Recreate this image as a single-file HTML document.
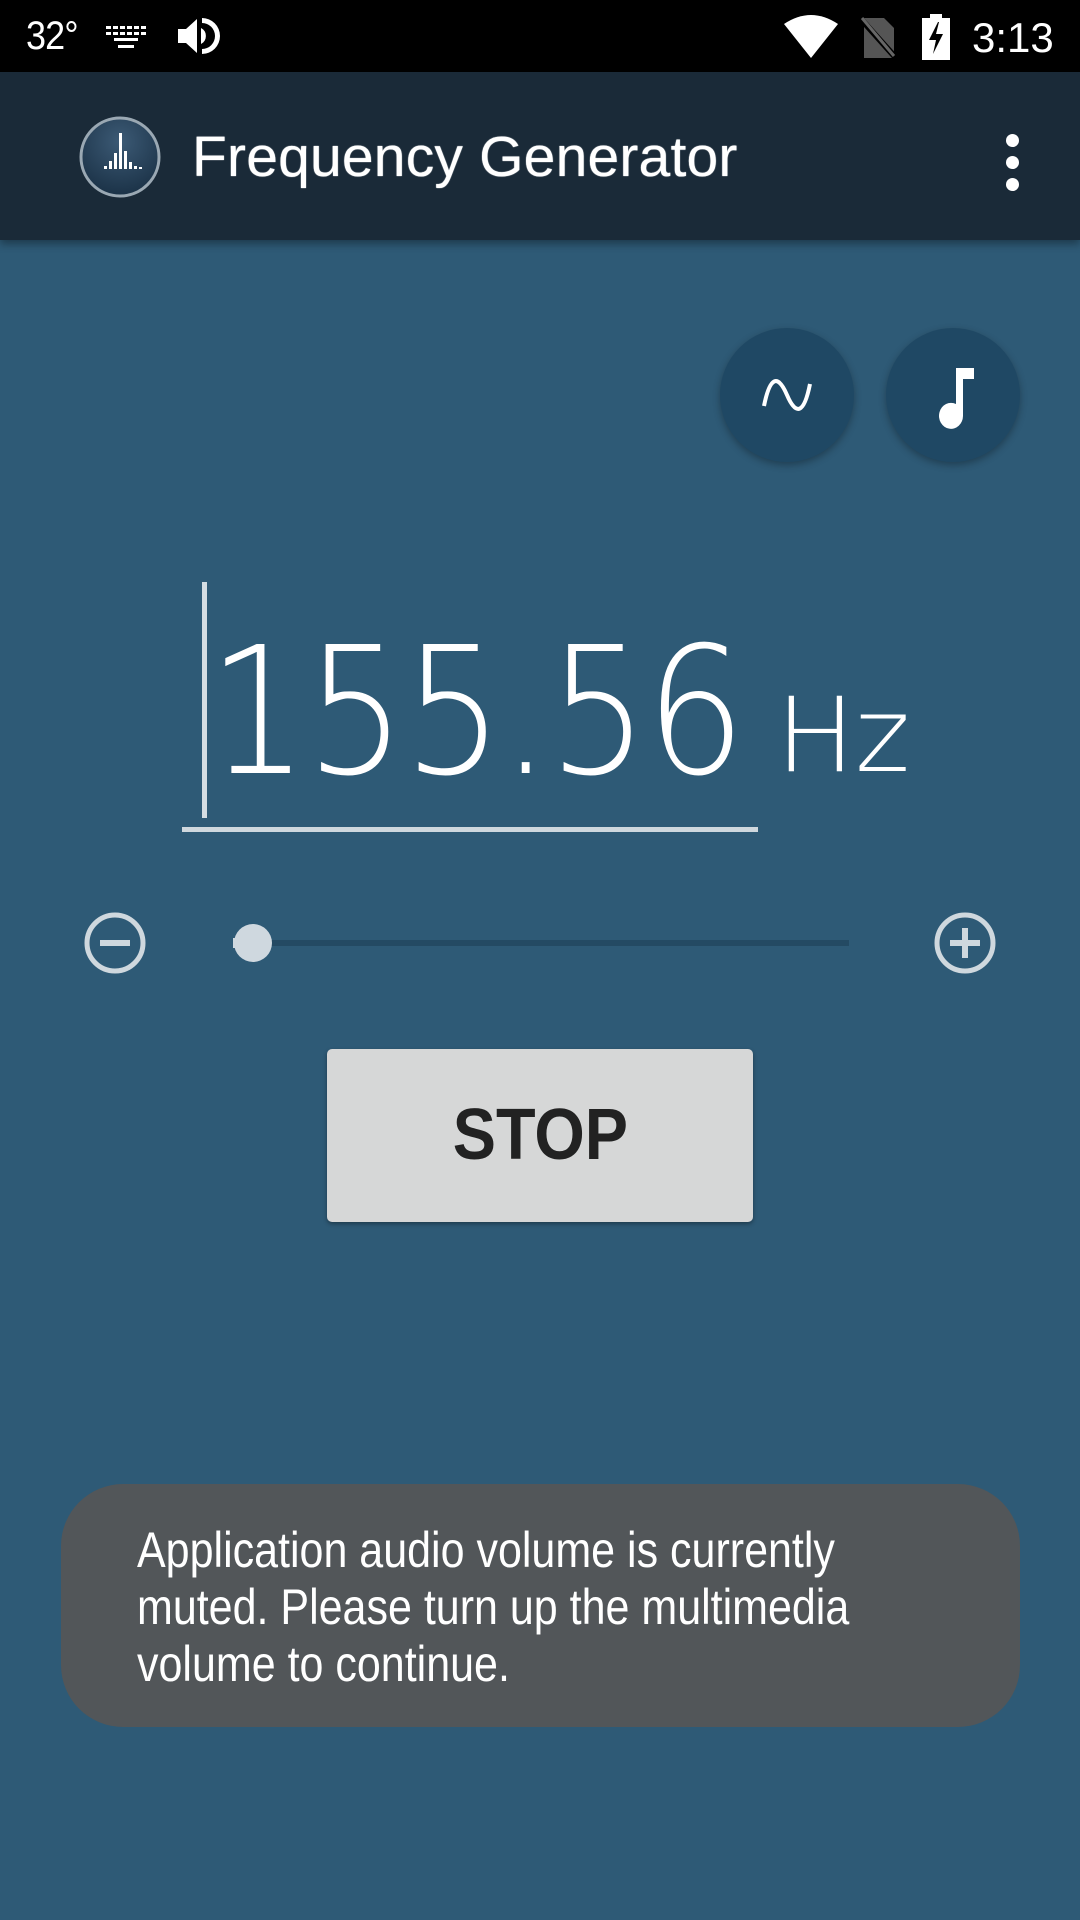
<!DOCTYPE html>
<html><head><meta charset="utf-8"><style>
*{margin:0;padding:0;box-sizing:border-box}
body{width:1080px;height:1920px;background:#2e5a76;position:relative;overflow:hidden;font-family:"Liberation Sans",sans-serif}
.abs{position:absolute}
#sb{left:0;top:0;width:1080px;height:72px;background:#000;color:#fff}
#ab{left:0;top:72px;width:1080px;height:168px;background:#1a2a38;box-shadow:0 4px 8px rgba(0,0,0,.35)}
.fab{width:134px;height:134px;border-radius:50%;background:#1f4864;box-shadow:0 3px 8px rgba(0,0,0,.3)}
</style></head><body>
<div id="sb" class="abs">
 <div class="abs" style="left:26px;top:14px;font-size:40px;letter-spacing:-1px;transform:scaleX(.9);transform-origin:left">32°</div>
 <svg class="abs" style="left:104px;top:24px" width="44" height="26" viewBox="0 0 44 26" fill="#fff"><g><rect x="2" y="2" width="5" height="3"/><rect x="9" y="2" width="5" height="3"/><rect x="16" y="2" width="5" height="3"/><rect x="23" y="2" width="5" height="3"/><rect x="30" y="2" width="5" height="3"/><rect x="37" y="2" width="5" height="3"/><rect x="2" y="8" width="5" height="3"/><rect x="9" y="8" width="5" height="3"/><rect x="16" y="8" width="5" height="3"/><rect x="23" y="8" width="5" height="3"/><rect x="30" y="8" width="5" height="3"/><rect x="37" y="8" width="5" height="3"/><rect x="10" y="14" width="24" height="3"/><rect x="14" y="21" width="16" height="3"/></g></svg>
 <svg class="abs" style="left:176px;top:16px" width="44" height="40" viewBox="0 0 44 40" fill="#fff"><path d="M2 13h8l11-10v34L10 27H2z"/><path d="M25 12a9 9 0 0 1 0 16z"/><path d="M26 2a18 18 0 0 1 0 36v-5a13 13 0 0 0 0-26z"/></svg>
 <svg class="abs" style="left:784px;top:14px" width="54" height="44" viewBox="0 0 54 44"><path d="M0 10Q27-8 54 10L27 44z" fill="#fff"/></svg>
 <svg class="abs" style="left:858px;top:16px" width="40" height="42" viewBox="0 0 40 42"><path d="M6 2h20l10 10v30H6z" fill="#555"/><path d="M2 2l36 40" stroke="#000" stroke-width="6"/><path d="M4 2l32 38" stroke="#666" stroke-width="3"/></svg>
 <svg class="abs" style="left:921px;top:14px" width="30" height="46" viewBox="0 0 30 46"><path d="M9 0h12v4h8v42H1V4h8z" fill="#fff"/><path d="M17 8L8 26h7l-3 14 10-20h-7l3-12z" fill="#000"/></svg>
 <div class="abs" style="left:972px;top:14px;font-size:42px">3:13</div>
</div>
<div id="ab" class="abs">
 <svg class="abs" style="left:78px;top:43px" width="84" height="84" viewBox="0 0 84 84"><defs><radialGradient id="g" cx=".5" cy=".3" r=".7"><stop offset="0" stop-color="#3c5a75"/><stop offset="1" stop-color="#1b3247"/></radialGradient></defs><circle cx="42" cy="42" r="39" fill="url(#g)" stroke="#9aa8b3" stroke-width="3"/><g fill="#fff"><rect x="41" y="18" width="3" height="36"/><rect x="36" y="38" width="3" height="16"/><rect x="46" y="36" width="3" height="18"/><rect x="31" y="46" width="3" height="8"/><rect x="51" y="47" width="3" height="7"/><rect x="26" y="51" width="3" height="3"/><rect x="56" y="51" width="3" height="3"/><rect x="61" y="52" width="3" height="2"/></g></svg>
 <div class="abs" style="left:192px;top:52px;font-size:57px;color:#fff;white-space:nowrap;letter-spacing:.2px;text-shadow:0 0 1px #fff">Frequency Generator</div>
 <div class="abs" style="left:1006px;top:62px;width:13px;height:13px;border-radius:50%;background:#fff"></div>
 <div class="abs" style="left:1006px;top:84px;width:13px;height:13px;border-radius:50%;background:#fff"></div>
 <div class="abs" style="left:1006px;top:106px;width:13px;height:13px;border-radius:50%;background:#fff"></div>
</div>
<div class="abs fab" style="left:720px;top:328px"><svg width="134" height="134" viewBox="0 0 134 134"><path d="M44 78C50 48 58 46 67 67S84 86 90 56" fill="none" stroke="#fff" stroke-width="4"/></svg></div>
<div class="abs fab" style="left:886px;top:328px"><svg width="134" height="134" viewBox="0 0 134 134"><path d="M70 40h18v11H77v37a12 13 0 1 1-7-12z" fill="#fff"/></svg></div>
<div class="abs" style="left:202px;top:582px;width:5px;height:236px;background:#d4dde3"></div>
<div class="abs" style="left:208px;top:624px;font-family:'DejaVu Sans','Liberation Sans',sans-serif;font-weight:200;font-size:177px;color:#fff;white-space:nowrap;transform:scaleX(.89);transform-origin:left;line-height:1;letter-spacing:-3px">155.56</div>
<div class="abs" style="left:776px;top:685px;font-family:'DejaVu Sans','Liberation Sans',sans-serif;font-weight:200;font-size:103px;color:#fff;line-height:1;transform:scaleX(1.02);transform-origin:left">Hz</div>
<div class="abs" style="left:182px;top:827px;width:576px;height:5px;background:#cfd8de"></div>
<svg class="abs" style="left:82px;top:910px" width="66" height="66" viewBox="0 0 66 66"><circle cx="33" cy="33" r="28" fill="none" stroke="#cfd8de" stroke-width="5"/><rect x="18" y="30" width="30" height="6" fill="#cfd8de"/></svg>
<svg class="abs" style="left:932px;top:910px" width="66" height="66" viewBox="0 0 66 66"><circle cx="33" cy="33" r="28" fill="none" stroke="#cfd8de" stroke-width="5"/><rect x="18" y="30" width="30" height="6" fill="#cfd8de"/><rect x="30" y="18" width="6" height="30" fill="#cfd8de"/></svg>
<div class="abs" style="left:233px;top:940px;width:616px;height:6px;background:#244a63"></div>
<div class="abs" style="left:233px;top:938px;width:20px;height:10px;background:#cfd8df"></div>
<div class="abs" style="left:234px;top:924px;width:38px;height:38px;border-radius:50%;background:#cfd8df"></div>
<div class="abs" style="left:327px;top:1049px;width:426px;height:173px;background:#d6d7d7;border-radius:5px;box-shadow:0 2px 4px rgba(0,0,0,.35);text-align:center;line-height:173px;font-size:72px;font-weight:bold;color:#222"><span style="display:inline-block;transform:scaleX(.9)">STOP</span></div>
<div class="abs" style="left:61px;top:1484px;width:959px;height:243px;border-radius:62px;background:#525659"></div>
<div class="abs" style="left:137px;top:1522px;font-size:50px;line-height:57px;color:#fff;white-space:nowrap;transform:scaleX(.86);transform-origin:left">Application audio volume is currently<br>muted. Please turn up the multimedia<br>volume to continue.</div>
</body></html>
